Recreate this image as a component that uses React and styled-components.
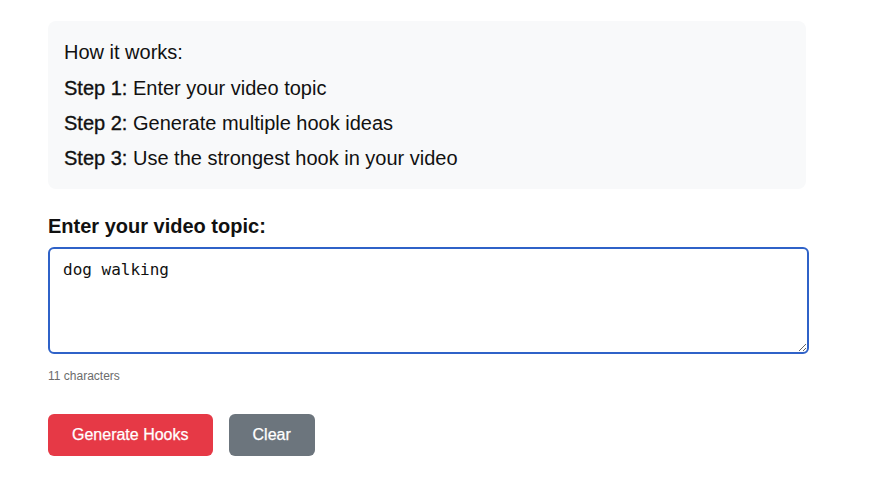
import React, { useState } from "react";
import styled, { createGlobalStyle } from "styled-components";

const Global = createGlobalStyle`
  html, body { margin: 0; padding: 0; background: #ffffff; }
  body { font-family: "Liberation Sans", Arial, sans-serif; color: #111; }
  * { box-sizing: border-box; }
`;

const Page = styled.div`
  padding: 21px 0 0 48px;
  width: 895px;
`;

const InfoPanel = styled.section`
  width: 758px;
  background: #f8f9fa;
  border-radius: 8px;
  padding: 19px 16px 19px;
`;

const InfoTitle = styled.h3`
  margin: 0 0 12px;
  font-size: 20px;
  font-weight: 400;
  line-height: 24px;
`;

const StepList = styled.div`
  display: flex;
  flex-direction: column;
  gap: 11px;
`;

const Step = styled.p`
  margin: 0;
  font-size: 20px;
  line-height: 24px;
  b { font-weight: 400; -webkit-text-stroke: 0.35px #111; }
`;

const FieldLabel = styled.label`
  display: block;
  margin: 25px 0 9px;
  font-size: 20px;
  font-weight: 700;
  line-height: 24px;
`;

const TopicInput = styled.textarea`
  display: block;
  width: 761px;
  height: 107px;
  border: 2px solid #2f62c8;
  border-radius: 6px;
  padding: 11px 13px;
  font-family: "DejaVu Sans Mono", monospace;
  font-size: 16px;
  line-height: 20px;
  color: #111;
  outline: none;
  resize: vertical;
`;

const CharCount = styled.div`
  margin-top: 14px;
  font-size: 12px;
  color: #6c6c6c;
  line-height: 16px;
`;

const Actions = styled.div`
  display: flex;
  gap: 16px;
  margin-top: 30px;
`;

const Button = styled.button`
  height: 42px;
  padding: 0 ${(p) => p.$pad}px;
  border: none;
  border-radius: 6px;
  background: ${(p) => p.$bg};
  color: #fff;
  font-family: "Liberation Sans", Arial, sans-serif;
  font-size: 16px;
  -webkit-text-stroke: 0.25px #fff;
  cursor: pointer;
`;

const steps = [
  ["Step 1:", "Enter your video topic"],
  ["Step 2:", "Generate multiple hook ideas"],
  ["Step 3:", "Use the strongest hook in your video"],
];

export default function App() {
  const [topic, setTopic] = useState("dog walking");
  return (
    <Page>
      <Global />
      <InfoPanel>
        <InfoTitle>How it works:</InfoTitle>
        <StepList>
          {steps.map(([k, v]) => (
            <Step key={k}>
              <b>{k}</b> {v}
            </Step>
          ))}
        </StepList>
      </InfoPanel>
      <FieldLabel htmlFor="topic">Enter your video topic:</FieldLabel>
      <TopicInput id="topic" value={topic} onChange={(e) => setTopic(e.target.value)} />
      <CharCount>{topic.length} characters</CharCount>
      <Actions>
        <Button $bg="#e63946" $pad={24}>Generate Hooks</Button>
        <Button $bg="#6c757d" $pad={24}>Clear</Button>
      </Actions>
    </Page>
  );
}
